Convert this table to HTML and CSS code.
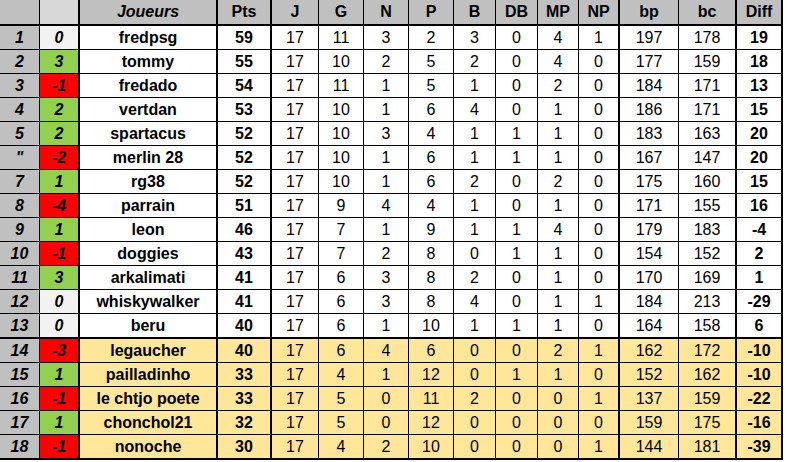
FILE: index.html
```html
<!DOCTYPE html>
<html lang="fr">
<head>
<meta charset="utf-8">
<title>Classement</title>
<link rel="stylesheet" href="styles.css">
</head>
<body>
<div class="table">
  <div class="row head">
    <div class="c rk"></div><div class="c ch"></div><div class="c nm"><i>Joueurs</i></div><div class="c pts">Pts</div>
    <div class="c">J</div><div class="c">G</div><div class="c">N</div><div class="c">P</div><div class="c">B</div><div class="c">DB</div><div class="c">MP</div><div class="c tk">NP</div>
    <div class="c">bp</div><div class="c tk">bc</div><div class="c tk">Diff</div>
  </div>
  <div class="row"><div class="c rk">1</div><div class="c ch z">0</div><div class="c nm">fredpsg</div><div class="c pts">59</div><div class="c n">17</div><div class="c n">11</div><div class="c n">3</div><div class="c n">2</div><div class="c n">3</div><div class="c n">0</div><div class="c n">4</div><div class="c n tk">1</div><div class="c n">197</div><div class="c n tk">178</div><div class="c tk">19</div></div>
  <div class="row"><div class="c rk">2</div><div class="c ch up">3</div><div class="c nm">tommy</div><div class="c pts">55</div><div class="c n">17</div><div class="c n">10</div><div class="c n">2</div><div class="c n">5</div><div class="c n">2</div><div class="c n">0</div><div class="c n">4</div><div class="c n tk">0</div><div class="c n">177</div><div class="c n tk">159</div><div class="c tk">18</div></div>
  <div class="row"><div class="c rk">3</div><div class="c ch dn">-1</div><div class="c nm">fredado</div><div class="c pts">54</div><div class="c n">17</div><div class="c n">11</div><div class="c n">1</div><div class="c n">5</div><div class="c n">1</div><div class="c n">0</div><div class="c n">2</div><div class="c n tk">0</div><div class="c n">184</div><div class="c n tk">171</div><div class="c tk">13</div></div>
  <div class="row"><div class="c rk">4</div><div class="c ch up">2</div><div class="c nm">vertdan</div><div class="c pts">53</div><div class="c n">17</div><div class="c n">10</div><div class="c n">1</div><div class="c n">6</div><div class="c n">4</div><div class="c n">0</div><div class="c n">1</div><div class="c n tk">0</div><div class="c n">186</div><div class="c n tk">171</div><div class="c tk">15</div></div>
  <div class="row"><div class="c rk">5</div><div class="c ch up">2</div><div class="c nm">spartacus</div><div class="c pts">52</div><div class="c n">17</div><div class="c n">10</div><div class="c n">3</div><div class="c n">4</div><div class="c n">1</div><div class="c n">1</div><div class="c n">1</div><div class="c n tk">0</div><div class="c n">183</div><div class="c n tk">163</div><div class="c tk">20</div></div>
  <div class="row"><div class="c rk">"</div><div class="c ch dn">-2</div><div class="c nm">merlin 28</div><div class="c pts">52</div><div class="c n">17</div><div class="c n">10</div><div class="c n">1</div><div class="c n">6</div><div class="c n">1</div><div class="c n">1</div><div class="c n">1</div><div class="c n tk">0</div><div class="c n">167</div><div class="c n tk">147</div><div class="c tk">20</div></div>
  <div class="row"><div class="c rk">7</div><div class="c ch up">1</div><div class="c nm">rg38</div><div class="c pts">52</div><div class="c n">17</div><div class="c n">10</div><div class="c n">1</div><div class="c n">6</div><div class="c n">2</div><div class="c n">0</div><div class="c n">2</div><div class="c n tk">0</div><div class="c n">175</div><div class="c n tk">160</div><div class="c tk">15</div></div>
  <div class="row"><div class="c rk">8</div><div class="c ch dn">-4</div><div class="c nm">parrain</div><div class="c pts">51</div><div class="c n">17</div><div class="c n">9</div><div class="c n">4</div><div class="c n">4</div><div class="c n">1</div><div class="c n">0</div><div class="c n">1</div><div class="c n tk">0</div><div class="c n">171</div><div class="c n tk">155</div><div class="c tk">16</div></div>
  <div class="row"><div class="c rk">9</div><div class="c ch up">1</div><div class="c nm">leon</div><div class="c pts">46</div><div class="c n">17</div><div class="c n">7</div><div class="c n">1</div><div class="c n">9</div><div class="c n">1</div><div class="c n">1</div><div class="c n">4</div><div class="c n tk">0</div><div class="c n">179</div><div class="c n tk">183</div><div class="c tk">-4</div></div>
  <div class="row"><div class="c rk">10</div><div class="c ch dn">-1</div><div class="c nm">doggies</div><div class="c pts">43</div><div class="c n">17</div><div class="c n">7</div><div class="c n">2</div><div class="c n">8</div><div class="c n">0</div><div class="c n">1</div><div class="c n">1</div><div class="c n tk">0</div><div class="c n">154</div><div class="c n tk">152</div><div class="c tk">2</div></div>
  <div class="row"><div class="c rk">11</div><div class="c ch up">3</div><div class="c nm">arkalimati</div><div class="c pts">41</div><div class="c n">17</div><div class="c n">6</div><div class="c n">3</div><div class="c n">8</div><div class="c n">2</div><div class="c n">0</div><div class="c n">1</div><div class="c n tk">0</div><div class="c n">170</div><div class="c n tk">169</div><div class="c tk">1</div></div>
  <div class="row"><div class="c rk">12</div><div class="c ch z">0</div><div class="c nm">whiskywalker</div><div class="c pts">41</div><div class="c n">17</div><div class="c n">6</div><div class="c n">3</div><div class="c n">8</div><div class="c n">4</div><div class="c n">0</div><div class="c n">1</div><div class="c n tk">1</div><div class="c n">184</div><div class="c n tk">213</div><div class="c tk">-29</div></div>
  <div class="row sep"><div class="c rk">13</div><div class="c ch z">0</div><div class="c nm">beru</div><div class="c pts">40</div><div class="c n">17</div><div class="c n">6</div><div class="c n">1</div><div class="c n">10</div><div class="c n">1</div><div class="c n">1</div><div class="c n">1</div><div class="c n tk">0</div><div class="c n">164</div><div class="c n tk">158</div><div class="c tk">6</div></div>
  <div class="row low"><div class="c rk">14</div><div class="c ch dn">-3</div><div class="c nm">legaucher</div><div class="c pts">40</div><div class="c n">17</div><div class="c n">6</div><div class="c n">4</div><div class="c n">6</div><div class="c n">0</div><div class="c n">0</div><div class="c n">2</div><div class="c n tk">1</div><div class="c n">162</div><div class="c n tk">172</div><div class="c tk">-10</div></div>
  <div class="row low"><div class="c rk">15</div><div class="c ch up">1</div><div class="c nm">pailladinho</div><div class="c pts">33</div><div class="c n">17</div><div class="c n">4</div><div class="c n">1</div><div class="c n">12</div><div class="c n">0</div><div class="c n">1</div><div class="c n">1</div><div class="c n tk">0</div><div class="c n">152</div><div class="c n tk">162</div><div class="c tk">-10</div></div>
  <div class="row low"><div class="c rk">16</div><div class="c ch dn">-1</div><div class="c nm">le chtjo poete</div><div class="c pts">33</div><div class="c n">17</div><div class="c n">5</div><div class="c n">0</div><div class="c n">11</div><div class="c n">2</div><div class="c n">0</div><div class="c n">0</div><div class="c n tk">1</div><div class="c n">137</div><div class="c n tk">159</div><div class="c tk">-22</div></div>
  <div class="row low"><div class="c rk">17</div><div class="c ch up">1</div><div class="c nm">chonchol21</div><div class="c pts">32</div><div class="c n">17</div><div class="c n">5</div><div class="c n">0</div><div class="c n">12</div><div class="c n">0</div><div class="c n">0</div><div class="c n">0</div><div class="c n tk">0</div><div class="c n">159</div><div class="c n tk">175</div><div class="c tk">-16</div></div>
  <div class="row low last"><div class="c rk">18</div><div class="c ch dn">-1</div><div class="c nm">nonoche</div><div class="c pts">30</div><div class="c n">17</div><div class="c n">4</div><div class="c n">2</div><div class="c n">10</div><div class="c n">0</div><div class="c n">0</div><div class="c n">0</div><div class="c n tk">1</div><div class="c n">144</div><div class="c n tk">181</div><div class="c tk">-39</div></div>
</div>
</body>
</html>
```
FILE: styles.css
```css
html, body {
  margin: 0;
  padding: 0;
  background: #ffffff;
  overflow: hidden;
}
.table {
  width: 783px;
  font-family: "Liberation Sans", Arial, sans-serif;
  font-size: 16px;
  color: #000;
}
.row {
  display: grid;
  grid-template-columns: 40px 40px 138px 54px 47px 45px 45px 45px 42px 42px 41px 41px 59px 58px 46px;
  height: 24px;
}
.c {
  box-sizing: border-box;
  border-right: 1px solid #000;
  border-bottom: 1px solid #000;
  display: flex;
  align-items: center;
  justify-content: center;
  font-weight: bold;
  line-height: 1;
  white-space: nowrap;
  overflow: hidden;
}
.c.n {
  font-weight: normal;
}
.c.tk, .c.ch, .c.nm, .c.pts {
  border-right-width: 2px;
}
.rk {
  background: #c0c0c0;
  font-style: italic;
}
.ch {
  font-style: italic;
}
.ch.z { background: #f2f2f2; }
.ch.up { background: #92d050; }
.ch.dn { background: #ff0000; }
.head {
  height: 26px;
  background: #c0c0c0;
}
.head .c {
  border-bottom-width: 2px;
  padding-bottom: 1px;
}
.head .ch {
  background: #d8d8d8;
}
.sep { height: 25px; }
.sep .c { border-bottom-width: 2px; }
.low .c { background: #ffe699; }
.low .c.rk { background: #c0c0c0; }
.low .c.ch.up { background: #92d050; }
.low .c.ch.dn { background: #ff0000; }
.last { height: 25px; }
.last .c { border-bottom-width: 2px; }
```
